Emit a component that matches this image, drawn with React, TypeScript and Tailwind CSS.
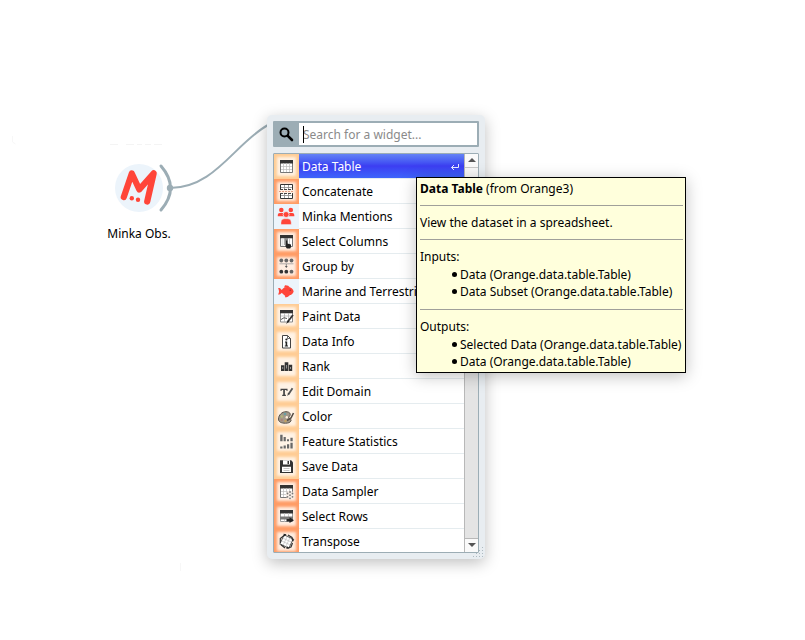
import React from "react";

const K = "#333333";

const Grid = () => (
  <g>
    <path d="M6.5 6.5h12v12h-12z" fill="#fff" stroke="#777" />
    <path d="M6 6h13v3.5H6z" fill={K} />
    <path d="M9.5 9v9M12.5 9v9M15.5 9v9M7 12.5h11M7 15.5h11" stroke="#bbb" strokeWidth=".7" />
  </g>
);

const Person = ({ x, y, s }: { x: number; y: number; s: number }) => (
  <g transform={`translate(${x} ${y}) scale(${s})`} fill="#ff4539">
    <circle r="2.9" />
    <path d="M-4.5 8V6.4Q-4.5 3.7-2 3.7H2Q4.5 3.7 4.5 6.4V8Z" />
  </g>
);

const icons: Record<string, React.ReactNode> = {
  table: <Grid />,
  concat: (
    <g>
      <path d="M6.5 5.5h12v5h-12zM6.5 14.5h12v5h-12z" fill="#fff" />
      <path d="M6.5 11v-5.500h12V11M6.5 14v5.500h12V14" stroke="#333" fill="none" />
      <path d="M7 8.500h11M7 16.500h11M10.500 6v5M14.500 6v5M10.500 14v5M14.500 14v5" stroke="#888" strokeWidth=".8" />
      <path d="M6 10.500h13M6 14.500h13" stroke="#444" strokeDasharray="3 1" />
      <path d="M5 12.500h15" stroke="#d9886a" strokeWidth=".8" strokeDasharray="2 1" />
    </g>
  ),
  people: (
    <g>
      <Person x={7.3} y={6} s={0.78} />
      <Person x={16.8} y={6} s={0.78} />
      <circle cx="12.100" cy="10.500" r="3" fill="#ff4539" stroke="#ecf4fb" strokeWidth=".8" />
      <path d="M7 20.500v-2q0-3.700 3.400-3.700h3.400q3.400 0 3.400 3.700v2z" fill="#ff4539" stroke="#ecf4fb" strokeWidth=".4" />
    </g>
  ),
  columns: (
    <g>
      <path d="M6.5 6.5h12v11h-12z" fill="#fff" stroke="#777" />
      <path d="M6 6h13v3.300H6z" fill={K} />
      <path d="M15.500 9v8" stroke="#bbb" strokeWidth=".8" />
      <path d="M7.500 9.500h2v7.500h-2z" fill="#e4e4e4" />
      <path d="M10.300 9h3.700v7h-3.700z" fill="#8a8a8a" />
      <path d="M12 11.500h1.300v3l3.700.9v2.600l-.8 1.500h-3.400l-2-3.300 1.200.3z" fill="#222" />
    </g>
  ),
  group: (
    <g>
      <g fill="#666"><circle cx="7.300" cy="6.500" r="1.900" /><circle cx="12.300" cy="6.500" r="1.900" /><circle cx="17.500" cy="6.500" r="1.900" /></g>
      <path d="M5.500 9.800h14" stroke="#999" strokeWidth=".8" />
      <path d="M12.300 10v3" stroke="#888" />
      <path d="M10.900 12h2.800l-1.400 2z" fill="#555" />
      <g fill={K}><circle cx="7.300" cy="17.700" r="1.900" /><circle cx="12.300" cy="17.700" r="1.900" /><circle cx="17.500" cy="17.700" r="1.900" fill="#666" /></g>
    </g>
  ),
  fish: (
    <g fill="#ff4539">
      <ellipse cx="13.500" cy="12.300" rx="6" ry="4.300" />
      <path d="M4 9.300q2-.8 3 .9l1.500 1.300v1.800L7 14.600q-1 1.500-3 .8 1-1.300 1-3t-1-3.100zM10 8.500l1-2.300q3.500-.2 5 2.300zM10.500 16l1 2.400q3 0 4.200-2.400z" />
      <circle cx="16.300" cy="11.300" r=".8" fill="#9d3541" />
    </g>
  ),
  paint: (
    <g>
      <path d="M6.500 6.500h12v11.500h-12z" fill="#fff" stroke="#888" />
      <path d="M6 6h13v3.300H6z" fill={K} />
      <path d="M7 12h11M10.500 9v9M14.500 9v9" stroke="#aaa" strokeWidth=".7" />
      <path d="M7 15.500q3-3 6-1" stroke="#555" fill="none" />
      <path d="m19 11-5.500 7" stroke="#333" strokeWidth="1.800" />
      <path d="m14.200 16-2.200 4 3.400-2.500z" fill="#222" />
    </g>
  ),
  info: (
    <g>
      <path d="M8.500 6.500h5l3 3v9.500h-8z" fill="#fff" stroke="#444" />
      <path d="M13.500 6.500v3h3" fill="none" stroke="#444" strokeWidth=".8" />
      <circle cx="12.400" cy="10.500" r="1.100" fill="#222" />
      <path d="M11 12.500h2.200v4H14v1h-3.200v-1h.8v-3H11z" fill="#222" />
    </g>
  ),
  rank: (
    <g>
      <path d="M7 11.300h3.300V17H7zM10.700 8.300h3.600V17h-3.600zM14.800 10.800h3.400V17h-3.400z" fill="#333" />
      <path d="M12.500 11v3.500M8.700 13v2M16.500 13v2" stroke="#aaa" strokeWidth=".8" />
    </g>
  ),
  edit: (
    <g>
      <path d="M6.500 9.700h7v2.200h-1v-.8h-1.600v4.600h1v1.200H8.200v-1.200h1v-4.600H7.600v.8H6.500z" fill="#444" />
      <path d="m18.500 9.300-4 6" stroke="#555" strokeWidth="1.800" />
      <path d="m14 13.800-.7 3.200 2.200-2z" fill="#444" />
    </g>
  ),
  color: (
    <g>
      <path d="M4.500 15c0-4 3.500-7.300 7.500-7.300 3.800 0 4.800 2.300 4 3.800-.6 1.200-1.500 1.500-1.200 2.500.3 1.200 3 .6 2.200 2.800-.7 1.700-2.700 2.400-5.500 2.400-4.300 0-7-1.200-7-4.200z" fill="#a3998b" stroke="#5b544c" />
      <circle cx="11" cy="10" r="1.300" fill="#6a9ea3" /><circle cx="7.800" cy="12.500" r="1.200" fill="#b3b879" />
      <circle cx="7.700" cy="16" r="1.200" fill="#aa8279" /><circle cx="11.500" cy="17" r="1.200" fill="#c3a05f" />
      <circle cx="12.800" cy="13.300" r="1.200" fill="#fff0e0" />
      <path d="m19.500 9-2.500 5-4 2.500" stroke="#554d45" strokeWidth="1.600" fill="none" />
    </g>
  ),
  stats: (
    <path d="M6.200 5.700h2.400v6.600H6.200zM9.600 8h2.200v4.300H9.600zM13 10.200h2v2.100h-2zM16.400 8.800h2.300v3.500h-2.300zM6.200 17.500h2.300v2H6.200zM9.600 16.500h2.200v3H9.600zM13 15.200h2.200v4.300H13zM16.400 13.800h2.300v5.700h-2.300z" fill="#686868" />
  ),
  save: (
    <g>
      <path d="M6 6.300h11.200L19 8.300V19H6z" fill={K} />
      <path d="M9 6.300h7v4.200H9zM8 12.800h9V18H8z" fill="#fff" />
      <path d="M13.500 7h1.500v3h-1.500z" fill={K} />
      <path d="M9.500 14.500h6M9.500 16.500h6" stroke="#aaa" strokeWidth=".7" />
    </g>
  ),
  sampler: (
    <g>
      <Grid />
      <circle cx="16" cy="16" r="4.200" fill="#f8ede5" />
      <g fill="#777"><circle cx="16" cy="13" r=".9" /><circle cx="13.500" cy="14.500" r=".9" /><circle cx="18.500" cy="14.500" r=".9" /><circle cx="16" cy="16.200" r=".9" /><circle cx="13.500" cy="17.800" r=".9" /><circle cx="18.500" cy="17.800" r=".9" /><circle cx="16" cy="19.300" r=".9" /></g>
    </g>
  ),
  rows: (
    <g>
      <path d="M6.500 6.500h12v11h-12z" fill="#fff" stroke="#999" />
      <path d="M6 6h13v3.500H6z" fill={K} />
      <path d="M10.500 9v9M14.500 9v9" stroke="#bbb" strokeWidth=".7" />
      <path d="M6 12.500h13v3H6z" fill="#777" />
      <path d="M12.500 15h3v-1.700l4.500 2.900-4.500 2.900v-1.700h-3z" fill="#222" />
    </g>
  ),
  transpose: (
    <g>
      <g transform="rotate(25 12.500 12.500)">
        <path d="M7.500 7.500h10v10h-10z" fill="#fff" stroke="#555" strokeWidth=".9" />
        <path d="M11 8v9M14 8v9M8 11h9M8 14h9" stroke="#bbb" strokeWidth=".6" />
      </g>
      <path d="M6.300 14V9.500L11 5.800M14 6l4 2.500.7 2.500M18.500 14l-1.500 4-3 1M11 19l-4-3.300" fill="none" stroke="#333" strokeWidth="1.200" />
      <path d="m9.500 4.800 3 .4-2 2.200zM17.500 10.500l2.800-.2-1.300 2.400zM14.500 20l-2.700-.7 2-2z" fill="#222" />
    </g>
  ),
};

const light = "bg-[#fff3e6] shadow-[inset_0_0_3px_3px_#ffcc94]";
const dark = "bg-[#ffeee2] shadow-[inset_0_0_3px_3px_#ff9b64]";
const blue = "bg-[#ecf4fb]";

const items: [string, string, string][] = [
  ["Data Table", "table", light],
  ["Concatenate", "concat", dark],
  ["Minka Mentions", "people", blue],
  ["Select Columns", "columns", dark],
  ["Group by", "group", dark],
  ["Marine and Terrestrial", "fish", blue],
  ["Paint Data", "paint", light],
  ["Data Info", "info", light],
  ["Rank", "rank", light],
  ["Edit Domain", "edit", light],
  ["Color", "color", light],
  ["Feature Statistics", "stats", light],
  ["Save Data", "save", light],
  ["Data Sampler", "sampler", dark],
  ["Select Rows", "rows", dark],
  ["Transpose", "transpose", dark],
];

function Row({ item, selected }: { item: [string, string, string]; selected: boolean }) {
  const [label, icon, tile] = item;
  return (
    <div className="flex h-[25px] shrink-0">
      <div className={`size-[25px] shrink-0 ${tile}`}>
        <svg width="25" height="25" viewBox="0 0 25 25">{icons[icon]}</svg>
      </div>
      <div
        className={`flex min-w-0 flex-1 items-center justify-between overflow-hidden border-b border-[#e5ecef] pt-0.5 pl-[3px] pr-1 whitespace-nowrap ${
          selected ? "bg-linear-to-b from-[#6482f5] via-[#3c3df2] to-[#3e64fb] text-white" : "bg-white"
        }`}
      >
        <span>{label}</span>
        {selected && (
          <svg width="10" height="10" viewBox="0 0 10 10" fill="none" stroke="#e8ecff">
            <path d="M8.500 2v3.500H1.500M4 3 1.500 5.500 4 8" />
          </svg>
        )}
      </div>
    </div>
  );
}

function ScrollButton({ down = false }: { down?: boolean }) {
  return (
    <div className={`flex h-3.5 shrink-0 justify-center bg-[#fafafa] ${down ? "border-t border-[#b8b8b8] pt-1" : "border-b border-[#c8c8c8] pt-1"}`}>
      <svg width="8" height="4" viewBox="0 0 8 4" fill="#555">
        <path d={down ? "M0 0h8L4 4z" : "M0 4h8L4 0z"} />
      </svg>
    </div>
  );
}

function Menu() {
  return (
    <div className="absolute left-[267px] top-[115px] flex h-[444px] w-[218px] flex-col gap-1.5 rounded-[5px] bg-[#e8edf1] p-1.5 shadow-[0_4px_15px_rgba(0,0,0,0.25)]">
      <div className="flex h-[26px] shrink-0 rounded-[1px] border-2 border-[#9cadb5] bg-white">
        <div className="flex w-6 items-center bg-[#9cadb5] pl-1">
          <svg width="15" height="15" viewBox="0 0 15 15" fill="none" stroke="#000">
            <circle cx="5.500" cy="5.500" r="4" strokeWidth="2" />
            <path d="m8.800 8.800 4.200 4.200" strokeWidth="2.600" strokeLinecap="round" />
          </svg>
        </div>
        <div className="relative flex flex-1 items-center pt-0.5 pl-1 text-[#8a8a8a]">
          <span className="absolute left-1 top-[3px] h-[17px] w-px bg-black" />
          <span>Search for a widget...</span>
        </div>
      </div>
      <div className="flex h-[400px] shrink-0 overflow-hidden rounded-[1px] border border-[#9cadb5] bg-white">
        <div className="flex w-[190px] flex-col overflow-hidden">
          {items.map((item, i) => <Row key={item[0]} item={item} selected={i === 0} />)}
        </div>
        <div className="flex w-3.5 flex-col border-l border-[#b8b8b8] bg-[#e4e4e4]">
          <ScrollButton />
          <div className="h-40 border-b border-[#b8b8b8] bg-[#f7f7f7]" />
          <div className="flex-1" />
          <ScrollButton down />
        </div>
      </div>
      <svg width="12" height="12" className="absolute bottom-0 right-0" fill="#aebac1">
        <path d="M9 0h1v1H9zM6 3h1v1H6zM9 3h1v1H9zM3 6h1v1H3zM6 6h1v1H6zM9 6h1v1H9zM0 9h1v1H0zM3 9h1v1H3zM6 9h1v1H6zM9 9h1v1H9z" />
      </svg>
    </div>
  );
}

function Ports({ title, ports }: { title: string; ports: string[] }) {
  return (
    <div>
      <div className="h-[18px]">{title}</div>
      {ports.map((p) => (
        <div key={p} className="flex h-[17px] items-center gap-[3px] pl-8">
          <span className="size-[5px] shrink-0 rounded-full bg-black" />
          <span className="tracking-[-0.01px]">{p}</span>
        </div>
      ))}
    </div>
  );
}

function Tooltip() {
  return (
    <div className="absolute left-[416px] top-[177px] flex h-[196px] w-[270px] flex-col border border-black bg-[#ffffdc] pl-[3px] pr-0.5 pt-0.5 leading-[17px] whitespace-nowrap text-black shadow-[0_3px_15px_rgba(0,0,0,0.25)]">
      <div><b>Data Table</b> (from Orange3)</div>
      <hr className="mt-2 border-[#a0a09a]" />
      <div className="mt-2">View the dataset in a spreadsheet.</div>
      <hr className="mt-2 border-[#a0a09a]" />
      <div className="mt-2"><Ports title="Inputs:" ports={["Data (Orange.data.table.Table)", "Data Subset (Orange.data.table.Table)"]} /></div>
      <hr className="mt-[9px] border-[#a0a09a]" />
      <div className="mt-2"><Ports title="Outputs:" ports={["Selected Data (Orange.data.table.Table)", "Data (Orange.data.table.Table)"]} /></div>
    </div>
  );
}

export default function App() {
  return (
    <div className="relative h-[640px] w-[805px] overflow-hidden bg-white font-['Noto_Sans',sans-serif] text-[12px] text-black">
      <svg className="absolute left-0 top-0" width="300" height="600" fill="none">
        <path d="M110 144.500h8M126 144.500h8M137 144.500h5M145 144.500h6M154 144.500h8" stroke="#f4f4f4" />
        <path d="M12.500 136v6l3 2M180.500 563v8" stroke="#f7f7f7" />
        <circle cx="139" cy="188" r="24" fill="#ecf4fb" />
        <path d="M123.800 197 131.800 173.500 139.300 189.500 153.700 173.200 147.200 201.500" stroke="#ff4539" strokeWidth="6.200" strokeLinecap="round" strokeLinejoin="round" />
        <circle cx="131.800" cy="198.300" r="2.200" fill="#ff4539" />
        <circle cx="138" cy="199.800" r="2.200" fill="#ff4539" />
        <path d="M161 166Q180 188 161 210" stroke="#9cadb5" strokeWidth="3" strokeLinecap="round" />
        <path d="M170 188C215 188 235 143 268 125" stroke="#9cadb5" strokeWidth="2" />
        <circle cx="170" cy="188" r="3.200" fill="#9cadb5" />
      </svg>
      <div className="absolute left-[89px] top-[225px] w-[100px] text-center leading-[17px]">Minka Obs.</div>
      <Menu />
      <Tooltip />
    </div>
  );
}
